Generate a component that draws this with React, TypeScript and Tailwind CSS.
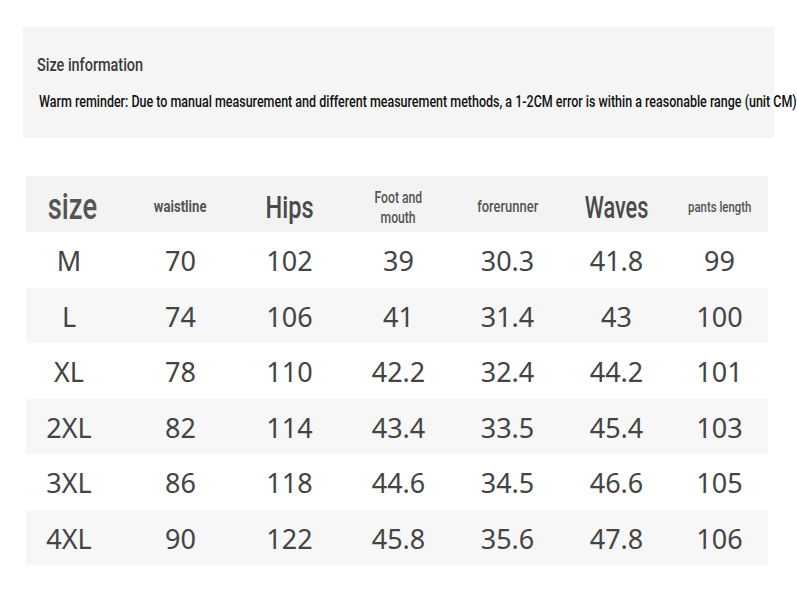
import React from 'react'

const rows = [
  ['M', '70', '102', '39', '30.3', '41.8', '99'],
  ['L', '74', '106', '41', '31.4', '43', '100'],
  ['XL', '78', '110', '42.2', '32.4', '44.2', '101'],
  ['2XL', '82', '114', '43.4', '33.5', '45.4', '103'],
  ['3XL', '86', '118', '44.6', '34.5', '46.6', '105'],
  ['4XL', '90', '122', '45.8', '35.6', '47.8', '106'],
];

// no condensed face installed, so squeeze Roboto horizontally
const cond = { fontFamily: 'Roboto, "Liberation Sans", sans-serif' };
const cols = 'grid grid-cols-[100px_109px_109px_109px_109px_109px_97px]';

const Squeeze = ({ children, className = 'scale-x-[0.76]' }: { children: React.ReactNode; className?: string }) => (
  <span className={'inline-block whitespace-nowrap ' + className}>{children}</span>
);

const App = () => {
  return (
    <div className="w-[797px] h-[598px] bg-white overflow-hidden pt-[27px]" style={cond}>
      <div className="ml-[23px] w-[751px] h-[111px] bg-[#f5f5f5] pt-[24px]">
        <p className="pl-[14px] text-[19px] leading-[28px] font-medium text-[#3a3a3a]">
          <Squeeze className="origin-left scale-x-[0.76]">Size information</Squeeze>
        </p>
        <p className="pl-[16px] mt-[13px] text-[16px] leading-[20px] font-medium text-[#111]">
          <Squeeze className="origin-left scale-x-[0.78]">
            Warm reminder: Due to manual measurement and different measurement methods, a 1-2CM error is within a reasonable range (unit CM)
          </Squeeze>
        </p>
      </div>

      <div className="ml-[26px] mt-[38px] w-[742px]">
        <div className={cols + ' h-[56px] pt-[6px] items-center bg-[#f3f3f3] text-[#555] text-center font-medium'}>
          <div className="pr-[8px] text-[36px] leading-none"><Squeeze>size</Squeeze></div>
          <div className="text-[16px] font-bold"><Squeeze className="scale-x-[0.82]">waistline</Squeeze></div>
          <div className="text-[31px] leading-none text-[#4a4a4a]"><Squeeze>Hips</Squeeze></div>
          <div className="text-[16px] leading-[20px] mt-[2px]"><Squeeze>Foot and</Squeeze><br /><Squeeze>mouth</Squeeze></div>
          <div className="text-[16px]"><Squeeze className="scale-x-[0.81]">forerunner</Squeeze></div>
          <div className="text-[31px] leading-none text-[#4a4a4a]"><Squeeze className="scale-x-[0.7]">Waves</Squeeze></div>
          <div className="text-[15px]"><Squeeze>pants length</Squeeze></div>
        </div>
        {rows.map((r, i) => (
          <div
            key={r[0]}
            className={cols + ' h-[55.5px] pt-[3px] items-center text-center text-[27px] text-[#444] ' + (i % 2 === 1 ? 'bg-[#f7f7f7]' : 'bg-white')}
            style={{ fontFamily: '"Noto Sans", sans-serif' }}
          >
            {r.map((c, j) => (
              <div key={j} className={j === 0 ? 'pr-[14px]' : ''}>{c}</div>
            ))}
          </div>
        ))}
      </div>
    </div>
  );
};

export default App
